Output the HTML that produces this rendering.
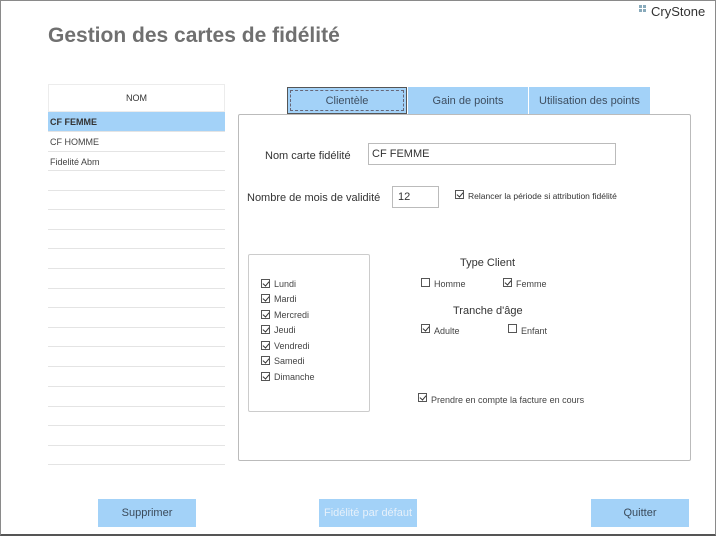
<!DOCTYPE html>
<html><head><meta charset="utf-8"><style>
*{margin:0;padding:0;box-sizing:border-box}
body{width:717px;height:538px;background:#fff;position:relative;overflow:hidden;font-family:"Liberation Sans",sans-serif;color:#444}
.a{position:absolute}
.frame{left:0;top:0;width:716px;height:536px;border:1px solid #8a8a8a;border-bottom:2px solid #555}
.t{white-space:nowrap}
.cb{position:absolute;width:9px;height:9px;border:1px solid #555;background:#fff}
.cb.c::after{content:"";position:absolute;left:2px;top:0px;width:3px;height:5px;border-right:1.5px solid #333;border-bottom:1.5px solid #333;transform:rotate(40deg)}
.s{font-size:9px;color:#444}
.line{left:48px;width:177px;height:1px;background:#e4e4e4}
.btn{background:#a3d2f8;font-size:11px;color:#3a4a5a;text-align:center;line-height:29px;height:28px}
.tab{top:87px;height:27px;background:#a3d2f8;font-size:11px;color:#3e4e60;text-align:center;line-height:29px}
</style></head><body>
<div class="a frame"></div>
<div class="a" style="left:639px;top:5px;width:3px;height:3px;background:#8ab;box-shadow:4px 0 #8ab,0 4px #8ab,4px 4px #8ab"></div>
<div class="a t" style="left:651px;top:4px;font-size:13px;color:#333">CryStone</div>
<div class="a t" style="left:48px;top:24px;font-size:21px;font-weight:bold;color:#707070">Gestion des cartes de fidélité</div>

<div class="a" style="left:48px;top:84px;width:177px;height:28px;border:1px solid #ececec;font-size:9px;text-align:center;line-height:27px;color:#333">NOM</div>
<div class="a t" style="left:48px;top:112px;width:177px;height:19px;background:#a3d2f8;font-size:9px;font-weight:bold;line-height:20px;padding-left:2px;color:#333">CF FEMME</div>
<div class="a t s" style="left:50px;top:137px">CF HOMME</div>
<div class="a t s" style="left:50px;top:157px">Fidelité Abm</div>
<div class="a line" style="top:131px"></div><div class="a line" style="top:151px"></div><div class="a line" style="top:170px"></div><div class="a line" style="top:190px"></div><div class="a line" style="top:209px"></div><div class="a line" style="top:229px"></div><div class="a line" style="top:248px"></div><div class="a line" style="top:268px"></div><div class="a line" style="top:288px"></div><div class="a line" style="top:307px"></div><div class="a line" style="top:327px"></div><div class="a line" style="top:346px"></div><div class="a line" style="top:366px"></div><div class="a line" style="top:386px"></div><div class="a line" style="top:406px"></div><div class="a line" style="top:425px"></div><div class="a line" style="top:445px"></div><div class="a line" style="top:464px"></div>

<div class="a" style="left:238px;top:114px;width:453px;height:347px;border:1px solid #bbb;border-radius:2px"></div>
<div class="a tab" style="left:287px;width:120px;border:1px solid #555"><div style="position:absolute;left:2px;top:2px;right:2px;bottom:2px;border:1px dashed #667"></div><span style="position:relative;top:-1px">Clientèle</span></div>
<div class="a tab" style="left:408px;width:120px">Gain de points</div>
<div class="a tab" style="left:529px;width:121px">Utilisation des points</div>

<div class="a t" style="left:265px;top:150px;font-size:11px;color:#333">Nom carte fidélité</div>
<div class="a t" style="left:368px;top:143px;width:248px;height:22px;border:1px solid #bbb;font-size:11px;line-height:21px;padding-left:3px;color:#333">CF FEMME</div>
<div class="a t" style="left:247px;top:192px;font-size:11px;color:#333">Nombre de mois de validité</div>
<div class="a t" style="left:392px;top:186px;width:47px;height:22px;border:1px solid #bbb;font-size:11px;line-height:21px;padding-left:5px;color:#333">12</div>
<div class="cb c" style="left:455px;top:190px"></div>
<div class="a t" style="left:468px;top:191px;font-size:8.5px;color:#333">Relancer la période si attribution fidélité</div>

<div class="a" style="left:248px;top:254px;width:122px;height:158px;border:1px solid #ccc;border-radius:2px"></div>
<div class="cb c" style="left:261px;top:279px"></div><div class="a t s" style="left:274px;top:279px">Lundi</div>
<div class="cb c" style="left:261px;top:294px"></div><div class="a t s" style="left:274px;top:294px">Mardi</div>
<div class="cb c" style="left:261px;top:310px"></div><div class="a t s" style="left:274px;top:310px">Mercredi</div>
<div class="cb c" style="left:261px;top:325px"></div><div class="a t s" style="left:274px;top:325px">Jeudi</div>
<div class="cb c" style="left:261px;top:341px"></div><div class="a t s" style="left:274px;top:341px">Vendredi</div>
<div class="cb c" style="left:261px;top:356px"></div><div class="a t s" style="left:274px;top:356px">Samedi</div>
<div class="cb c" style="left:261px;top:372px"></div><div class="a t s" style="left:274px;top:372px">Dimanche</div>

<div class="a t" style="left:460px;top:257px;font-size:11px;color:#333">Type Client</div>
<div class="cb" style="left:421px;top:278px"></div><div class="a t s" style="left:434px;top:279px">Homme</div>
<div class="cb c" style="left:503px;top:278px"></div><div class="a t s" style="left:516px;top:279px">Femme</div>
<div class="a t" style="left:453px;top:305px;font-size:11px;color:#333">Tranche d'âge</div>
<div class="cb c" style="left:421px;top:324px"></div><div class="a t s" style="left:434px;top:326px">Adulte</div>
<div class="cb" style="left:508px;top:324px"></div><div class="a t s" style="left:521px;top:326px">Enfant</div>
<div class="cb c" style="left:418px;top:393px"></div><div class="a t s" style="left:431px;top:395px">Prendre en compte la facture en cours</div>

<div class="a btn" style="left:98px;top:499px;width:98px">Supprimer</div>
<div class="a btn" style="left:319px;top:499px;width:98px;color:#e6f0fa">Fidélité par défaut</div>
<div class="a btn" style="left:591px;top:499px;width:98px">Quitter</div>
</body></html>
